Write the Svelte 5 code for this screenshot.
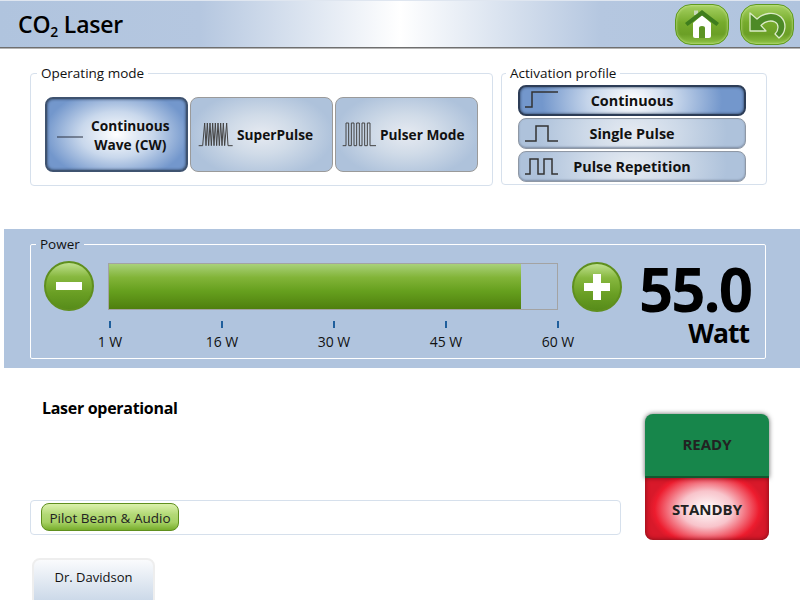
<script>
  const modes = [
    { label: ['Continuous', 'Wave (CW)'], icon: 'M12 33H51', active: true, gap: 'cw' },
    { label: ['SuperPulse'], icon: 'M4 46H10L13 12L15 46L17 12L19 46L21 12L23 46L25 12L27 46L29 12L31 46L33 12L35 46L37 12L39 46L41 12L43 46L46 12L48 46H55', active: false, gap: 'sp' },
    { label: ['Pulser Mode'], icon: 'M4 46H9V12H13V46H17V12H21V46H25V12H29V46H33V12H37V46H41V12H45V46H54', active: false, gap: 'pm' }
  ];
  const profiles = [
    { label: 'Continuous', icon: 'M1 17H8V2H34', active: true },
    { label: 'Single Pulse', icon: 'M1 17H12V2H24V17H34', active: false },
    { label: 'Pulse Repetition', icon: 'M1 17H6V2H14V17H20V2H28V17H34', active: false }
  ];
  const ticks = ['1 W', '16 W', '30 W', '45 W', '60 W'];
  const fill = 92;
</script>

<div class="app">
  <header class="bar">
    <h1>CO<sub>2</sub> Laser</h1>
    <div class="navs">
      <button class="nav" aria-label="Home">
        <svg viewBox="0 0 38 30" width="38" height="30">
          <path d="M11 6V1.5H15V6Z" fill="#c9d8b8" />
          <path d="M10 14V27Q10 29 12 29H26Q28 29 28 27V14L19 6Z" fill="#fff" />
          <path d="M16 29V19Q16 17 19 17Q22 17 22 19V29Z" fill="#5c9422" />
          <path d="M2 14L19 1L36 14L33.500 17L19 6.500L4.500 17Z" fill="#3f7d1d" />
        </svg>
      </button>
      <button class="nav" aria-label="Back">
        <svg viewBox="0 0 40 30" width="40" height="30">
          <path d="M3 4V22H19L14 16.500C18 12 24 11 28 13C32 15 32 21 28 25L32 29C39 24 40 14 34 8C27 2 16 4 10 10L3 4Z" fill="#4d8a26" stroke="#dcebc8" stroke-width="1.300" stroke-linejoin="round" />
        </svg>
      </button>
    </div>
  </header>

  <section class="top">
    <fieldset class="group modes">
      <legend>Operating mode</legend>
      <div class="mode-row">
        {#each modes as m}
          <button class="mode {m.gap}" class:on={m.active}>
            <svg class="wave" viewBox="0 0 60 60" width="40" height="40">
              <path d={m.icon} fill="none" stroke={m.active ? '#2a3140' : '#444'} stroke-width="1.500" />
            </svg>
            <span>{#each m.label as l}<span class="ln">{l}</span>{/each}</span>
          </button>
        {/each}
      </div>
    </fieldset>
    <fieldset class="group profile">
      <legend>Activation profile</legend>
      <div class="prof-col">
        {#each profiles as p}
          <button class="prof" class:on={p.active}>
            <svg viewBox="0 0 35 19" width="35" height="19">
              <path d={p.icon} fill="none" stroke="#333" stroke-width="1.500" />
            </svg>
            <span>{p.label}</span>
          </button>
        {/each}
      </div>
    </fieldset>
  </section>

  <section class="band">
    <fieldset class="group power">
      <legend>Power</legend>
      <div class="pow-row">
        <button class="round minus" aria-label="Decrease"><i class="h"></i></button>
        <div class="meter">
          <div class="track"><div class="fill" style="width:{fill}%"></div></div>
          <div class="scale">
            {#each ticks as t}
              <div class="tick"><i></i><span>{t}</span></div>
            {/each}
          </div>
        </div>
        <button class="round plus" aria-label="Increase"><i class="h"></i><i class="v"></i></button>
        <div class="value">
          <strong>55.0</strong>
          <b>Watt</b>
        </div>
      </div>
    </fieldset>
  </section>

  <section class="lower">
    <div class="left">
      <h2>Laser operational</h2>
      <div class="pilot"><button class="pill">Pilot Beam &amp; Audio</button></div>
    </div>
    <div class="status">
      <div class="ready">READY</div>
      <div class="standby">STANDBY</div>
    </div>
  </section>

  <footer class="user"><div class="tab">Dr. Davidson</div></footer>
</div>

<style>
  :global(body) { margin: 0; background: #fff; }
  .app {
    width: 800px; height: 600px; overflow: hidden; display: flex; flex-direction: column;
    font-family: "Open Sans", "Noto Sans", sans-serif; color: #111; background: #fff;
  }
  button { font: inherit; color: inherit; margin: 0; padding: 0; cursor: pointer; }
  .bar {
    height: 48px; box-sizing: border-box; flex: none; display: flex; align-items: center; justify-content: space-between;
    padding: 0 6px 0 18px; border-top: 1px solid #dfe6f0; border-bottom: 1px solid #6f6f6f;
    box-shadow: 0 1px 0 #b5b5b5;
    background: linear-gradient(90deg, #b0c4de 0%, #b5c7e0 25%, #ffffff 50%, #b5c7e0 75%, #b0c4de 100%);
  }
  h1 { margin: 0; font-size: 23px; font-weight: 600; letter-spacing: -0.2px; line-height: 30px; color: #000; }
  h1 sub { font-size: 14px; line-height: 0; vertical-align: -4px; }
  .navs { display: flex; gap: 11px; }
  .nav {
    width: 54px; height: 41px; border: 1px solid #5f9a1e; border-radius: 16px; display: flex; align-items: center; justify-content: center;
    background: linear-gradient(180deg, #a6d162 0%, #76ab2c 45%, #6b9f26 75%, #8cc043 100%);
    box-shadow: inset 0 0 3px #d5ec9f;
  }
  .group { margin: 0; min-width: 0; box-sizing: border-box; border: 1px solid #d6e0ec; border-radius: 4px; }
  legend { font-size: 13.500px; line-height: 16px; padding: 0 4px; color: #111; }
  .top { display: flex; gap: 8px; padding: 16px 0 0 30px; height: 140px; box-sizing: border-box; flex: none; align-items: flex-start; }
  .modes { width: 463px; height: 121px; padding: 16px 0 0 14px; margin-top: 1px; }
  .modes legend { margin-left: -8px; }
  .mode-row { display: flex; gap: 2px; }
  .mode {
    width: 143px; height: 75px; box-sizing: border-box; border: 1px solid #9a9a9a; border-radius: 8px;
    display: flex; align-items: center; gap: 1px; padding: 0 0 0 5px;
    font-size: 13.700px; font-weight: 700; line-height: 19px; color: #111; text-align: center;
    background: radial-gradient(ellipse 72px 44px at center, #e6eaf1 0%, #d0dbe8 45%, #aec2db 100%);
  }
  .mode.on {
    border: 2px solid #3f5370; box-shadow: inset 0 0 3px #24364f; gap: 2px; padding-left: 2px;
    background: radial-gradient(ellipse 72px 46px at center, #fff 0%, #c9d8ec 50%, #7397cc 100%);
  }
  .mode.pm { gap: 0; padding-left: 4px; }
  .wave { flex: none; }
  .ln { display: block; }
  .profile { width: 266px; height: 120px; padding: 4px 0 0 16px; margin-top: 1px; }
  .profile legend { margin-left: -12px; }
  .prof-col { display: flex; flex-direction: column; gap: 2px; }
  .prof {
    position: relative; width: 228px; height: 31px; box-sizing: border-box; border: 1px solid #8f98a5; border-radius: 8px;
    display: flex; align-items: center; justify-content: center;
    font-size: 14.400px; font-weight: 700; color: #111;
    background: radial-gradient(ellipse 95px 60px at center, #e6ebf2 0%, #cdd9e8 50%, #aec2db 100%);
    box-shadow: inset 0 -1px 2px #7f8ea5;
  }
  .prof svg { position: absolute; left: 5px; top: 5px; }
  .prof.on {
    border: 2px solid #2d3d57;
    background: radial-gradient(ellipse 90px 60px at center, #fff 0%, #c4d4ea 50%, #7397cc 100%);
    box-shadow: inset 0 0 3px #24364f;
  }
  .prof.on svg { left: 4px; top: 3px; }
  .band {
    flex: none; margin: 41px 0 0 4px; height: 139px; box-sizing: border-box; background: #b0c4de; padding: 7px 0 0 26px;
  }
  .power { width: 736px; height: 123px; border-color: #fff; border-radius: 2px; padding: 0 0 0 13px; }
  .power legend { margin-left: -8px; }
  .pow-row { display: flex; align-items: flex-start; }
  .round {
    flex: none; width: 50px; height: 50px; box-sizing: border-box; border-radius: 50%; border: 2px solid #5f8f1e; position: relative;
    background: linear-gradient(180deg, #bfe08e 0%, #87b83f 30%, #6a9f24 65%, #578c1a 100%);
    margin-top: 9px;
  }
  .round i { position: absolute; background: #fff; }
  .round .h { left: 10px; top: 19px; width: 26px; height: 8px; }
  .round .v { left: 19px; top: 10px; width: 8px; height: 26px; }
  .meter { flex: none; width: 450px; margin: 11px 0 0 14px; }
  .track { height: 47px; box-sizing: border-box; border: 1px solid #a3a3a3; }
  .fill { height: 100%; background: linear-gradient(180deg, #a9d17a 0%, #82b438 30%, #66a01e 60%, #4f7f0e 100%); }
  .scale { display: flex; justify-content: space-between; margin: 11px -28px 0 -26px; }
  .tick { width: 56px; display: flex; flex-direction: column; align-items: center; font-size: 14px; color: #111; line-height: 18px; }
  .tick i { width: 2px; height: 7px; background: #1f5f9c; margin-bottom: 5px; }
  .plus { margin-left: 14px; margin-top: 10px; }
  .value { flex: none; width: 124px; margin-left: 18px; display: flex; flex-direction: column; align-items: flex-end; padding-right: 13px; box-sizing: border-box; margin-top: 12px; }
  .value strong { font-size: 60px; font-weight: 700; line-height: 50px; color: #000; letter-spacing: -2px; }
  .value b { font-size: 26.500px; font-weight: 700; line-height: 30px; color: #000; margin-top: 4px; margin-right: 2px; letter-spacing: -1px; }
  .lower { flex: none; display: flex; height: 172px; box-sizing: border-box; padding-left: 30px; }
  .left { width: 591px; }
  h2 { margin: 29px 0 0 12px; font-size: 16px; line-height: 22px; font-weight: 700; color: #000; letter-spacing: -0.3px; }
  .pilot { margin-top: 81px; height: 35px; box-sizing: border-box; border: 1px solid #d6e0ec; border-radius: 4px; padding: 2px 0 0 10px; }
  .pill {
    width: 138px; height: 28px; box-sizing: border-box; border: 1px solid #5f8f1e; border-radius: 8px; font-size: 13.500px; color: #222; padding-top: 1px;
    background: linear-gradient(180deg, #dcf1ac 0%, #b3d977 40%, #a7d165 70%, #77ad2c 100%);
  }
  .status {
    margin: 46px 0 0 24px; width: 124px; height: 126px; border-radius: 8px; display: flex; flex-direction: column;
    font-size: 15px; font-weight: 700; color: #222; text-align: center;
  }
  .ready {
    height: 64px; line-height: 60px; background: #17864b; border-radius: 8px 8px 0 0; box-sizing: border-box;
    box-shadow: 0 0 5px #666; border-bottom: 2px solid #14572f;
  }
  .standby {
    height: 62px; line-height: 63px; border-radius: 0 0 8px 8px;
    background: radial-gradient(ellipse 58px 40px at center, #fff 0%, #f8c4cb 45%, #ed1c2e 90%, #d8192a 100%);
    box-shadow: inset 0 0 5px #7a0c14;
  }
  .user { flex: none; padding: 18px 0 0 32px; }
  .tab {
    width: 123px; height: 50px; box-sizing: border-box; border: 2px solid #eee; border-radius: 8px 8px 0 0; padding-top: 8px; text-align: center; font-size: 13px; line-height: 18px; color: #111;
    background: linear-gradient(180deg, #fafbfd 0%, #c5d4e6 100%);
  }
</style>
